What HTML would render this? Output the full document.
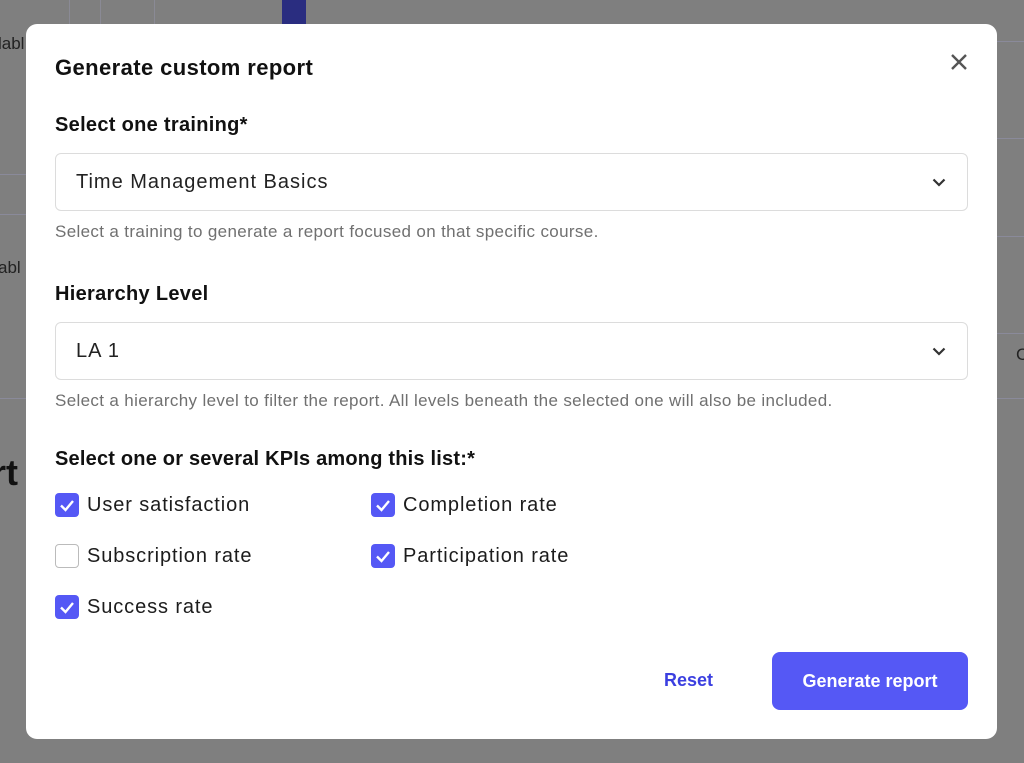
<!DOCTYPE html>
<html><head><style>
*{box-sizing:border-box;margin:0;padding:0}
body{width:1024px;height:763px;background:#7f7f7f;font-family:"Liberation Sans",sans-serif;position:relative;overflow:hidden}
.a{position:absolute}
.vl{position:absolute;top:0;width:1px;height:24px;background:#8a8a95}
.hl{position:absolute;height:1px;background:#8a8a9a}
.modal{position:absolute;left:26px;top:24px;width:971px;height:715px;background:#fff;border-radius:11px}
.t{position:absolute;left:29px;font-weight:bold;color:#111}
.sel{position:absolute;left:29px;width:913px;height:58px;border:1px solid #dcdcdc;border-radius:6px;font-size:20px;color:#222;padding-left:20px;line-height:56px;letter-spacing:1px}
.sel svg{position:absolute;right:21px;top:24px}
.help{position:absolute;left:29px;font-size:17px;letter-spacing:.35px;color:#707070}
.cb{position:absolute;width:24px;height:24px;border-radius:4px;background:#5558f5}
.cb.off{background:#fff;border:1.5px solid #bbb}
.lab{position:absolute;font-size:20px;letter-spacing:.9px;color:#1c1c1c;margin-top:1px}
</style></head><body>
<div class="vl" style="left:69px"></div><div class="vl" style="left:100px"></div><div class="vl" style="left:154px"></div>
<div class="a" style="left:282px;top:0;width:24px;height:24px;background:#2a2d80"></div>
<div class="hl" style="left:0;top:174px;width:26px"></div><div class="hl" style="left:0;top:214px;width:26px"></div><div class="hl" style="left:0;top:398px;width:26px"></div>
<div class="hl" style="left:997px;top:41px;width:27px"></div><div class="hl" style="left:997px;top:138px;width:27px"></div><div class="hl" style="left:997px;top:236px;width:27px"></div><div class="hl" style="left:997px;top:333px;width:27px"></div><div class="hl" style="left:997px;top:398px;width:27px"></div>
<div class="a" style="left:-2px;top:34px;font-size:17px;color:#222">labl</div>
<div class="a" style="left:-2px;top:258px;font-size:17px;color:#222">abl</div>
<div class="a" style="left:-8px;top:452px;font-size:36px;font-weight:bold;color:#111">rt</div>
<div class="a" style="left:1016px;top:345px;font-size:17px;color:#222">C</div>
<div class="modal">
<div class="t" style="top:31px;font-size:22px;letter-spacing:.4px">Generate custom report</div>
<svg class="a" style="left:924px;top:29px" width="18" height="18" viewBox="0 0 18 18"><path d="M2 2L16 16M16 2L2 16" stroke="#555" stroke-width="2.4"/></svg>
<div class="t" style="top:90px;font-size:20px;letter-spacing:.3px">Select one training*</div>
<div class="sel" style="top:129px">Time Management Basics<svg width="14" height="9" viewBox="0 0 14 9"><path d="M1.5 1.5L7 7L12.5 1.5" fill="none" stroke="#333" stroke-width="2.2"/></svg></div>
<div class="help" style="top:198px">Select a training to generate a report focused on that specific course.</div>
<div class="t" style="top:259px;font-size:20px;letter-spacing:.3px">Hierarchy Level</div>
<div class="sel" style="top:298px">LA 1<svg width="14" height="9" viewBox="0 0 14 9"><path d="M1.5 1.5L7 7L12.5 1.5" fill="none" stroke="#333" stroke-width="2.2"/></svg></div>
<div class="help" style="top:367px">Select a hierarchy level to filter the report. All levels beneath the selected one will also be included.</div>
<div class="t" style="top:424px;font-size:20px;letter-spacing:.2px">Select one or several KPIs among this list:*</div>
<div class="cb" style="left:29px;top:469px"><svg width="24" height="24"><path d="M6 12.5L10.5 17L18 8" fill="none" stroke="#fff" stroke-width="2.4"/></svg></div>
<div class="lab" style="left:61px;top:469px">User satisfaction</div>
<div class="cb off" style="left:29px;top:520px"></div>
<div class="lab" style="left:61px;top:520px">Subscription rate</div>
<div class="cb" style="left:29px;top:571px"><svg width="24" height="24"><path d="M6 12.5L10.5 17L18 8" fill="none" stroke="#fff" stroke-width="2.4"/></svg></div>
<div class="lab" style="left:61px;top:571px">Success rate</div>
<div class="cb" style="left:345px;top:469px"><svg width="24" height="24"><path d="M6 12.5L10.5 17L18 8" fill="none" stroke="#fff" stroke-width="2.4"/></svg></div>
<div class="lab" style="left:377px;top:469px">Completion rate</div>
<div class="cb" style="left:345px;top:520px"><svg width="24" height="24"><path d="M6 12.5L10.5 17L18 8" fill="none" stroke="#fff" stroke-width="2.4"/></svg></div>
<div class="lab" style="left:377px;top:520px">Participation rate</div>
<div class="a" style="left:638px;top:646px;font-size:18px;font-weight:bold;color:#3b3fe0">Reset</div>
<div class="a" style="left:746px;top:628px;width:196px;height:58px;background:#5558f5;border-radius:8px;color:#fff;font-size:18px;font-weight:bold;text-align:center;line-height:58px">Generate report</div>
</div>
</body></html>
